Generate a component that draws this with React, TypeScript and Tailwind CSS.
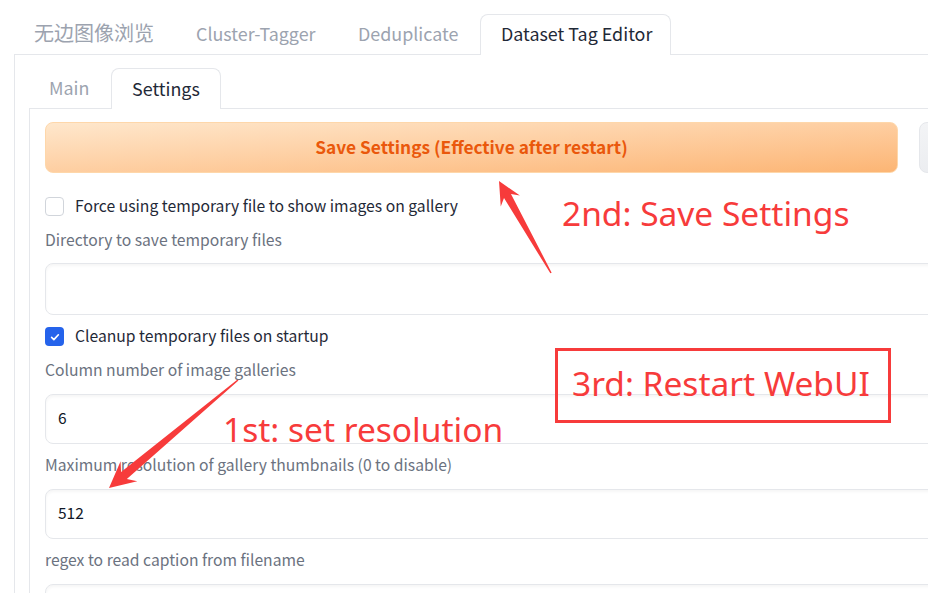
import React from "react"

type Pt = [number, number]

// tapered snip-style arrow, thin at the tail, head at the tip
function arrowPoints(tail: Pt, tip: Pt, headLen: number, headW: number, shaftW: number, tailW: number) {
  const dx = tip[0] - tail[0]
  const dy = tip[1] - tail[1]
  const len = Math.hypot(dx, dy)
  const ux = dx / len
  const uy = dy / len
  const nx = -uy
  const ny = ux
  const bx = tip[0] - ux * headLen
  const by = tip[1] - uy * headLen
  const back = headLen * 0.25
  const pts: Pt[] = [
    [tail[0] + (nx * tailW) / 2, tail[1] + (ny * tailW) / 2],
    [bx + ux * back + (nx * shaftW) / 2, by + uy * back + (ny * shaftW) / 2],
    [bx + (nx * headW) / 2, by + (ny * headW) / 2],
    tip,
    [bx - (nx * headW) / 2, by - (ny * headW) / 2],
    [bx + ux * back - (nx * shaftW) / 2, by + uy * back - (ny * shaftW) / 2],
    [tail[0] - (nx * tailW) / 2, tail[1] - (ny * tailW) / 2],
  ]
  return pts.map((p) => p.join(",")).join(" ")
}

function Checkbox({ checked, label }: { checked?: boolean; label: string }) {
  return (
    <div className="flex items-center h-[23px] gap-[11px]">
      {checked ? (
        <span className="w-[19px] h-[19px] rounded-[4px] bg-[#2563eb] flex items-center justify-center">
          <svg viewBox="0 0 16 16" className="w-[12px] h-[12px]">
            <path d="M3.5 8.5l3 3 6-6.5" fill="none" stroke="white" strokeWidth="2.2" strokeLinecap="round" strokeLinejoin="round" />
          </svg>
        </span>
      ) : (
        <span className="w-[19px] h-[19px] rounded-[4px] border border-[#d1d5db] bg-white" />
      )}
      <span className="text-[15.7px] leading-[23px] -mt-[2px] text-[#1f2937]">{label}</span>
    </div>
  )
}

function Label({ children, className = "" }: { children: React.ReactNode; className?: string }) {
  return <div className={`h-[22px] leading-[20px] text-[15.7px] text-[#6b7280] ${className}`}>{children}</div>
}

function Field({ value, h, className = "" }: { value?: string; h: string; className?: string }) {
  return (
    <div
      className={`${h} w-[900px] rounded-lg border border-[#e5e7eb] bg-white shadow-[inset_0_2px_3px_rgba(0,0,0,0.04)] flex items-center pl-[12px] pb-[3px] text-[15.5px] text-[#111827] ${className}`}
    >
      {value}
    </div>
  )
}

export default function App() {
  return (
    <div
      className="relative w-[928px] h-[593px] overflow-hidden bg-white"
      style={{ fontFamily: '"Noto Sans CJK SC", "Noto Sans", sans-serif' }}
    >
      <div className="pt-[14px] pl-[14px]">
        {/* top tabs */}
        <div className="flex items-end h-[40px] text-[17.9px] whitespace-nowrap">
          <div className="w-[162px] px-5 h-[40px] flex items-center pb-[2px] text-[20px] text-[#9ca3af]">无边图像浏览</div>
          <div className="w-[162px] px-5 h-[40px] flex items-center pb-[2px] text-[#9ca3af]">Cluster-Tagger</div>
          <div className="w-[142px] px-5 h-[40px] flex items-center pb-[2px] text-[#9ca3af]">Deduplicate</div>
          <div className="relative z-10 -mb-px w-[191px] px-5 h-[41px] flex items-center pb-[3px] text-[#1f2937] bg-white border border-b-0 border-[#e5e7eb] rounded-t-lg">
            Dataset Tag Editor
          </div>
        </div>

        {/* outer panel */}
        <div className="border-t border-l border-[#e5e7eb] pl-[14px] pt-[12px] h-[560px]">
          <div className="flex items-end h-[41px] text-[17.9px] whitespace-nowrap">
            <div className="px-5 h-[40px] w-[82px] flex items-center pb-[2px] text-[#9ca3af]">Main</div>
            <div className="relative z-10 -mb-px px-5 h-[41px] w-[110px] flex items-center pb-[2px] text-[#1f2937] bg-white border border-b-0 border-[#e5e7eb] rounded-t-lg">
              Settings
            </div>
          </div>

          {/* inner panel */}
          <div className="border-t border-l border-[#e5e7eb] pl-[15px] pt-[13px] h-[500px]">
            <div className="flex gap-[21px]">
              <button className="w-[853px] shrink-0 h-[51px] pb-[2px] rounded-lg border border-[#fed7aa] bg-linear-to-br from-[#fee7cc] to-[#fcb574] text-[#ea580c] font-semibold text-[17.3px]">
                Save Settings (Effective after restart)
              </button>
              <button className="w-[200px] shrink-0 h-[51px] rounded-lg border border-[#e5e7eb] bg-linear-to-br from-[#f3f4f6] to-[#e5e7eb]" />
            </div>

            <div className="mt-[22px]">
              <Checkbox label="Force using temporary file to show images on gallery" />
            </div>
            <Label className="mt-[12px]">Directory to save temporary files</Label>
            <Field h="h-[52px]" className="mt-[11px]" />

            <div className="mt-[10px]">
              <Checkbox checked label="Cleanup temporary files on startup" />
            </div>
            <Label className="mt-[12px]">Column number of image galleries</Label>
            <Field h="h-[50px]" value="6" className="mt-[12px]" />

            <Label className="mt-[11px]">Maximum resolution of gallery thumbnails (0 to disable)</Label>
            <Field h="h-[50px]" value="512" className="mt-[12px]" />

            <Label className="mt-[11px]">regex to read caption from filename</Label>
            <Field h="h-[50px]" className="mt-[12px]" />
          </div>
        </div>
      </div>

      {/* annotations */}
      <svg className="absolute inset-0 pointer-events-none" width="928" height="593">
        <polygon points={arrowPoints([551, 273], [499, 181], 23, 22, 8, 1.5)} fill="#f73b3b" />
        <polygon points={arrowPoints([238, 380], [109, 488], 26, 26, 9, 1.5)} fill="#f73b3b" />
      </svg>
      <div
        className="absolute left-[562px] top-[193px] leading-[40px] text-[33.5px] text-[#f73b3b]"
        style={{ fontFamily: '"Noto Sans", sans-serif' }}
      >
        2nd: Save Settings
      </div>
      <div className="absolute left-[555px] top-[348px] w-[336px] h-[75px] border-[3px] border-[#f73b3b]" />
      <div
        className="absolute left-[572px] top-[363px] leading-[40px] text-[33.5px] text-[#f73b3b]"
        style={{ fontFamily: '"Noto Sans", sans-serif' }}
      >
        3rd: Restart WebUI
      </div>
      <div
        className="absolute left-[223px] top-[409px] leading-[40px] text-[33.5px] text-[#f73b3b]"
        style={{ fontFamily: '"Noto Sans", sans-serif' }}
      >
        1st: set resolution
      </div>
    </div>
  )
}
